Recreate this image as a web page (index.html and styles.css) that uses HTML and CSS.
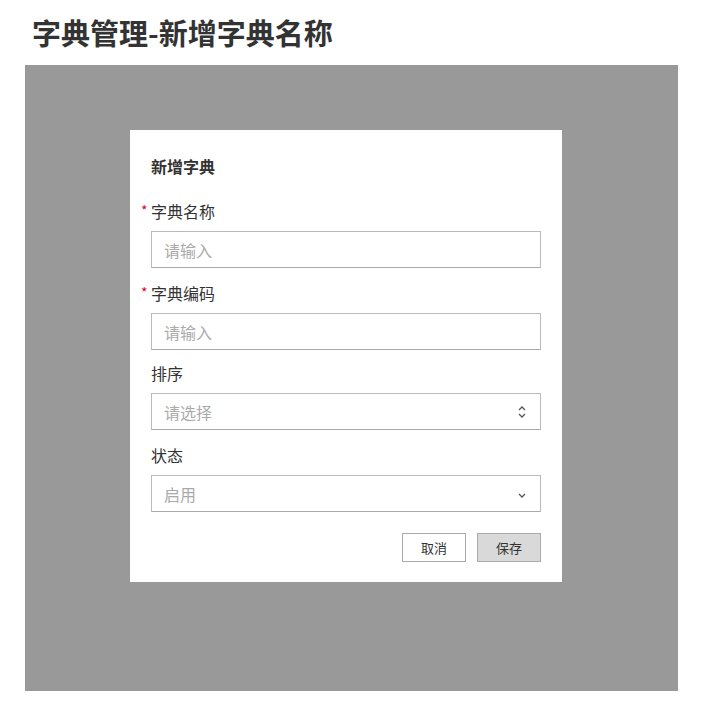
FILE: index.html
```html
<!DOCTYPE html>
<html lang="zh-CN">
<head>
    <meta charset="UTF-8">
    <title>字典管理-新增字典名称</title>
    <link rel="stylesheet" href="styles.css">
</head>
<body>
    <h1 class="page-title">字典管理-新增字典名称</h1>
    <section class="mask">
        <div class="dialog">
            <h2 class="dialog-title">新增字典</h2>
            <div class="field">
                <label class="label req">字典名称</label>
                <div class="input"><span class="ph">请输入</span></div>
            </div>
            <div class="field field-tight">
                <label class="label req">字典编码</label>
                <div class="input"><span class="ph">请输入</span></div>
            </div>
            <div class="field">
                <label class="label">排序</label>
                <div class="input">
                    <span class="ph">请选择</span>
                    <svg class="icon" width="10" height="14" viewBox="0 0 10 14">
                        <path d="M2 5 L5 2 L8 5" fill="none" stroke="#555" stroke-width="1.3"/>
                        <path d="M2 9 L5 12 L8 9" fill="none" stroke="#555" stroke-width="1.3"/>
                    </svg>
                </div>
            </div>
            <div class="field">
                <label class="label">状态</label>
                <div class="input">
                    <span class="ph">启用</span>
                    <svg class="icon" width="10" height="14" viewBox="0 0 10 14">
                        <path d="M2 7 L5 10 L8 7" fill="none" stroke="#555" stroke-width="1.3"/>
                    </svg>
                </div>
            </div>
            <div class="actions">
                <button class="btn">取消</button>
                <button class="btn btn-save">保存</button>
            </div>
        </div>
    </section>
</body>
</html>
```

FILE: styles.css
```css
*{padding: 0;margin: 0;box-sizing: border-box;}
body{font-family: "Noto Sans CJK SC", "Noto Sans", sans-serif;color: #333;background: #fff;}
.page-title{font-size: 29px;font-weight: 700;line-height: 36px;padding: 14px 0 0 32px;color: #333;}
.mask{width: 653px;height: 626px;margin: 15px 0 0 25px;background: #999;padding: 65px 0 0 105px;}
.dialog{width: 432px;background: #fff;padding: 26px 21px 20px;}
.dialog-title{font-size: 16px;font-weight: 700;line-height: 20px;margin-bottom: 25px;color: #333;}
.field{margin-bottom: 15px;}
.field-tight{margin-bottom: 13px;}
.field:last-of-type{margin-bottom: 0;}
.label{display: block;position: relative;font-size: 16px;line-height: 20px;margin-bottom: 10px;color: #333;}
.req::before{content: "*";position: absolute;left: -10px;top: -1px;color: #e4002b;font-size: 14px;}
.input{height: 37px;border: 1px solid #bbb;border-bottom-color: #aaa;display: flex;align-items: center;justify-content: space-between;padding: 0 13px 0 12px;}
.ph{font-size: 16px;color: #aaa;}
.icon{display: block;}
.actions{display: flex;justify-content: flex-end;gap: 11px;margin-top: 21px;}
.btn{width: 64px;height: 29px;border: 1px solid #aaa;background: #fff;font-family: inherit;font-size: 13px;color: #333;}
.btn-save{background: #d9d9d9;}
```
